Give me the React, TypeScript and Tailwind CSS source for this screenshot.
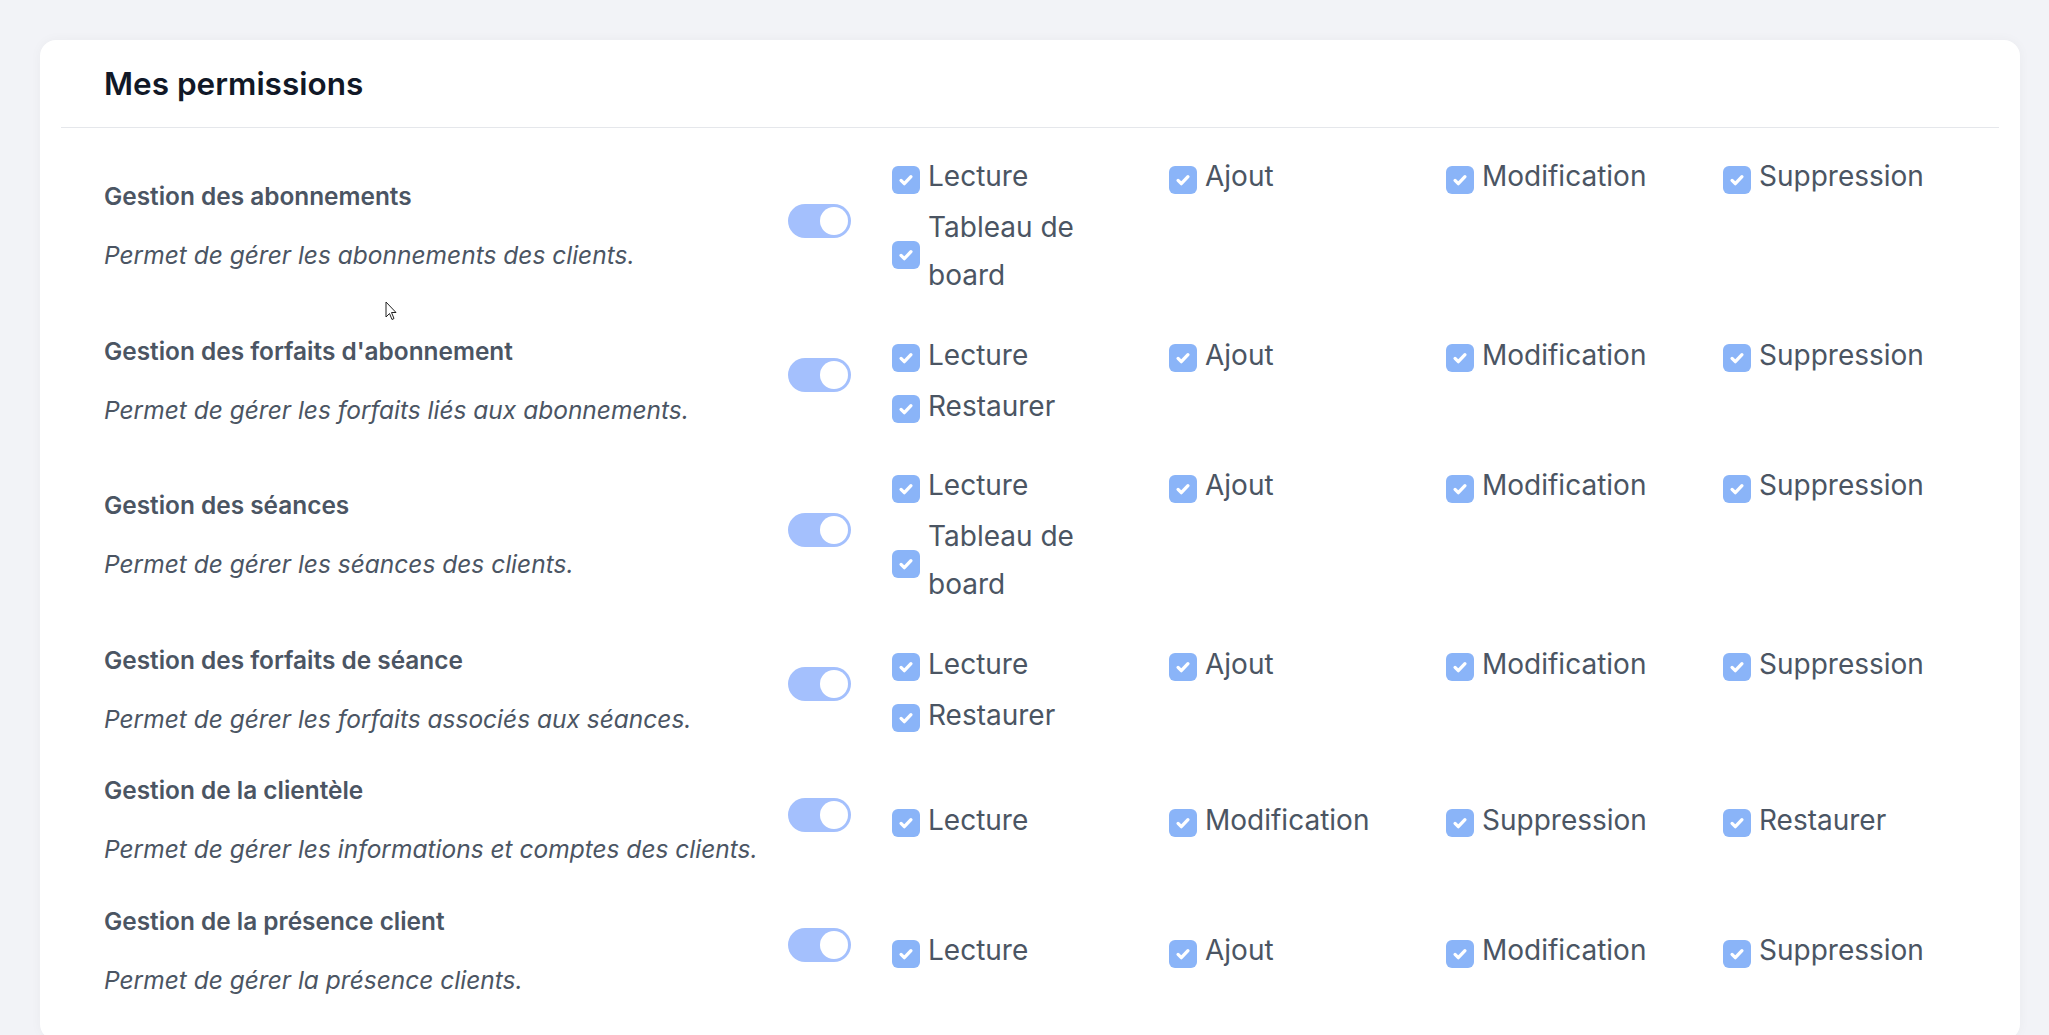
import React from "react";

type Perm = { title: string; desc: string; items: string[] };

const perms: Perm[] = [
  {
    title: "Gestion des abonnements",
    desc: "Permet de gérer les abonnements des clients.",
    items: ["Lecture", "Ajout", "Modification", "Suppression", "Tableau de board"],
  },
  {
    title: "Gestion des forfaits d'abonnement",
    desc: "Permet de gérer les forfaits liés aux abonnements.",
    items: ["Lecture", "Ajout", "Modification", "Suppression", "Restaurer"],
  },
  {
    title: "Gestion des séances",
    desc: "Permet de gérer les séances des clients.",
    items: ["Lecture", "Ajout", "Modification", "Suppression", "Tableau de board"],
  },
  {
    title: "Gestion des forfaits de séance",
    desc: "Permet de gérer les forfaits associés aux séances.",
    items: ["Lecture", "Ajout", "Modification", "Suppression", "Restaurer"],
  },
  {
    title: "Gestion de la clientèle",
    desc: "Permet de gérer les informations et comptes des clients.",
    items: ["Lecture", "Modification", "Suppression", "Restaurer"],
  },
  {
    title: "Gestion de la présence client",
    desc: "Permet de gérer la présence clients.",
    items: ["Lecture", "Ajout", "Modification", "Suppression"],
  },
];

function Check() {
  return (
    <span className="mt-[7px] flex h-[28px] w-[28px] shrink-0 items-center justify-center rounded-[6px] bg-[#8ab4f8]">
      <svg width="18" height="18" viewBox="0 0 16 16" fill="none">
        <path
          d="M3.6 8.4l2.9 2.9 5.9-6.3"
          stroke="white"
          strokeWidth="2.9"
          strokeLinecap="round"
          strokeLinejoin="round"
        />
      </svg>
    </span>
  );
}

function Toggle() {
  return (
    <div className="mb-[10px] flex h-[34px] w-[63px] shrink-0 items-center justify-end rounded-full bg-[#a4c0fd] pr-[3px]">
      <div className="h-[28px] w-[28px] rounded-full bg-white" />
    </div>
  );
}

export default function App() {
  return (
    <div
      className="relative min-h-screen bg-[#f2f3f7] pl-10 pr-[29px] pt-10"
      style={{ fontFamily: "Inter, 'Noto Sans', sans-serif" }}
    >
      <div className="rounded-2xl bg-white pb-10 shadow-[0_0_12px_rgba(0,0,0,0.04)]">
        <div className="flex h-[87px] items-center pl-[64px]">
          <h1 className="text-[31.5px] font-semibold leading-[40px] text-[#111827]">Mes permissions</h1>
        </div>
        <div className="mx-[21px] border-t border-[#e5e7eb]" />
        <div className="flex flex-col gap-[31.6px] pt-[24px]">
          {perms.map((p) => (
            <div key={p.title} className="flex items-center pl-[64px]">
              <div className="flex w-[684px] shrink-0 flex-col">
                <div className="text-[24.4px] font-semibold leading-[40px] text-[#4b5563]">{p.title}</div>
                <div className="mt-[19px] text-[24.5px] italic leading-[40px] text-[#4b5563]">{p.desc}</div>
              </div>
              <Toggle />
              <div className="ml-[41px] grid grid-cols-[repeat(4,217px)] gap-x-[60px] gap-y-[3px]">
                {p.items.map((it) => (
                  <div key={it} className="flex items-center gap-[8px]">
                    <Check />
                    <span className="text-[28px] leading-[48px] text-[#4b5563]">{it}</span>
                  </div>
                ))}
              </div>
            </div>
          ))}
        </div>
      </div>
      <svg
        className="absolute left-[385px] top-[301px]"
        width="13"
        height="20"
        viewBox="0 0 13 20"
      >
        <path d="M1 1v15l3.5-3.5 2.5 6 2-1-2.5-6H11z" fill="white" stroke="#222" strokeWidth="1" strokeLinejoin="round" />
      </svg>
    </div>
  );
}
